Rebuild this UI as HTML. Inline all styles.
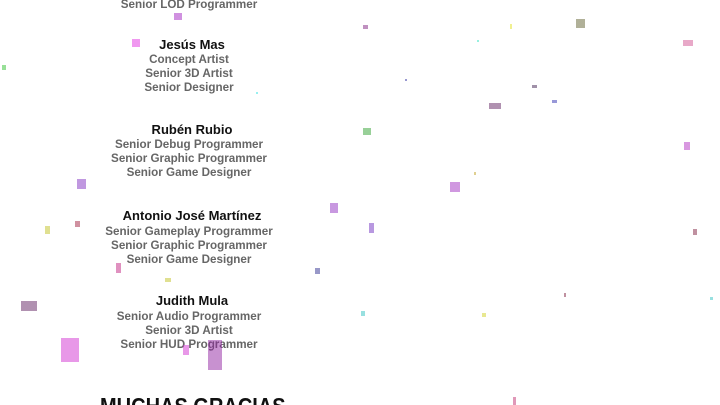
<!DOCTYPE html>
<html><head><meta charset="utf-8"><style>
html,body{margin:0;padding:0;background:#fff;width:720px;height:405px;overflow:hidden;position:relative}
.c{position:absolute;left:189px;white-space:nowrap;text-align:center;font-family:"Liberation Sans",sans-serif;font-weight:bold}
.n{font-size:13px;color:#111;transform:translateX(-50%);left:192px}
.r{font-size:12px;color:#666;transform:translateX(-50%) scaleX(0.97);letter-spacing:0}
.t{position:absolute;left:100px;top:393px;font-family:"Liberation Sans",sans-serif;font-weight:bold;font-size:23px;color:#111;white-space:nowrap;transform:scaleX(0.87);transform-origin:left top}
.d{position:absolute;background-image:radial-gradient(circle,var(--c) 55%,transparent 60%);background-size:2px 2px;opacity:0.75}
</style></head><body>
<div class="c r" style="top:-3px">Senior LOD Programmer</div>
<div class="c n" style="top:37px">Jesús Mas</div>
<div class="c r" style="top:52px">Concept Artist</div>
<div class="c r" style="top:66px">Senior 3D Artist</div>
<div class="c r" style="top:80px">Senior Designer</div>
<div class="c n" style="top:122px">Rubén Rubio</div>
<div class="c r" style="top:137px">Senior Debug Programmer</div>
<div class="c r" style="top:151px">Senior Graphic Programmer</div>
<div class="c r" style="top:165px">Senior Game Designer</div>
<div class="c n" style="top:208px">Antonio José Martínez</div>
<div class="c r" style="top:224px">Senior Gameplay Programmer</div>
<div class="c r" style="top:238px">Senior Graphic Programmer</div>
<div class="c r" style="top:252px">Senior Game Designer</div>
<div class="c n" style="top:293px">Judith Mula</div>
<div class="c r" style="top:309px">Senior Audio Programmer</div>
<div class="c r" style="top:323px">Senior 3D Artist</div>
<div class="c r" style="top:337px">Senior HUD Programmer</div>
<div class="t">MUCHAS GRACIAS</div>

<div class="d" style="--c:#a020c0;left:174px;top:13px;width:8px;height:7px"></div>
<div class="d" style="--c:#e030e0;left:132px;top:39px;width:8px;height:8px"></div>
<div class="d" style="--c:#30e0e0;left:256px;top:92px;width:2px;height:2px"></div>
<div class="d" style="--c:#30a030;left:363px;top:128px;width:8px;height:7px"></div>
<div class="d" style="--c:#8030c0;left:77px;top:179px;width:9px;height:10px"></div>
<div class="d" style="--c:#a030c0;left:450px;top:182px;width:10px;height:10px"></div>
<div class="d" style="--c:#9030c0;left:330px;top:203px;width:8px;height:10px"></div>
<div class="d" style="--c:#7030c0;left:369px;top:223px;width:5px;height:10px"></div>
<div class="d" style="--c:#c0c020;left:45px;top:226px;width:5px;height:8px"></div>
<div class="d" style="--c:#a02040;left:75px;top:221px;width:5px;height:6px"></div>
<div class="d" style="--c:#c02080;left:116px;top:263px;width:5px;height:10px"></div>
<div class="d" style="--c:#303090;left:315px;top:268px;width:5px;height:6px"></div>
<div class="d" style="--c:#c0c020;left:165px;top:278px;width:6px;height:4px"></div>
<div class="d" style="--c:#602060;left:21px;top:301px;width:16px;height:10px"></div>
<div class="d" style="--c:#d030d0;left:61px;top:338px;width:18px;height:24px"></div>
<div class="d" style="--c:#d030d0;left:183px;top:345px;width:6px;height:10px"></div>
<div class="d" style="--c:#9020a0;left:208px;top:340px;width:14px;height:30px"></div>
<div class="d" style="--c:#30c0c0;left:361px;top:311px;width:4px;height:5px"></div>
<div class="d" style="--c:#d0d020;left:482px;top:313px;width:4px;height:4px"></div>
<div class="d" style="--c:#802040;left:564px;top:293px;width:2px;height:4px"></div>
<div class="d" style="--c:#30c0c0;left:710px;top:297px;width:3px;height:3px"></div>
<div class="d" style="--c:#802040;left:693px;top:229px;width:4px;height:6px"></div>
<div class="d" style="--c:#b030c0;left:684px;top:142px;width:6px;height:8px"></div>
<div class="d" style="--c:#d05090;left:683px;top:40px;width:10px;height:6px"></div>
<div class="d" style="--c:#606030;left:576px;top:19px;width:9px;height:9px"></div>
<div class="d" style="--c:#e0e020;left:510px;top:24px;width:2px;height:5px"></div>
<div class="d" style="--c:#30e0c0;left:477px;top:40px;width:2px;height:2px"></div>
<div class="d" style="--c:#402050;left:532px;top:85px;width:5px;height:3px"></div>
<div class="d" style="--c:#3030b0;left:552px;top:100px;width:5px;height:3px"></div>
<div class="d" style="--c:#602060;left:489px;top:103px;width:12px;height:6px"></div>
<div class="d" style="--c:#802080;left:363px;top:25px;width:5px;height:4px"></div>
<div class="d" style="--c:#3030a0;left:405px;top:79px;width:2px;height:2px"></div>
<div class="d" style="--c:#30c030;left:2px;top:65px;width:4px;height:5px"></div>
<div class="d" style="--c:#c0a020;left:474px;top:172px;width:2px;height:3px"></div>
<div class="d" style="--c:#c03070;left:513px;top:397px;width:3px;height:8px"></div>
</body></html>
